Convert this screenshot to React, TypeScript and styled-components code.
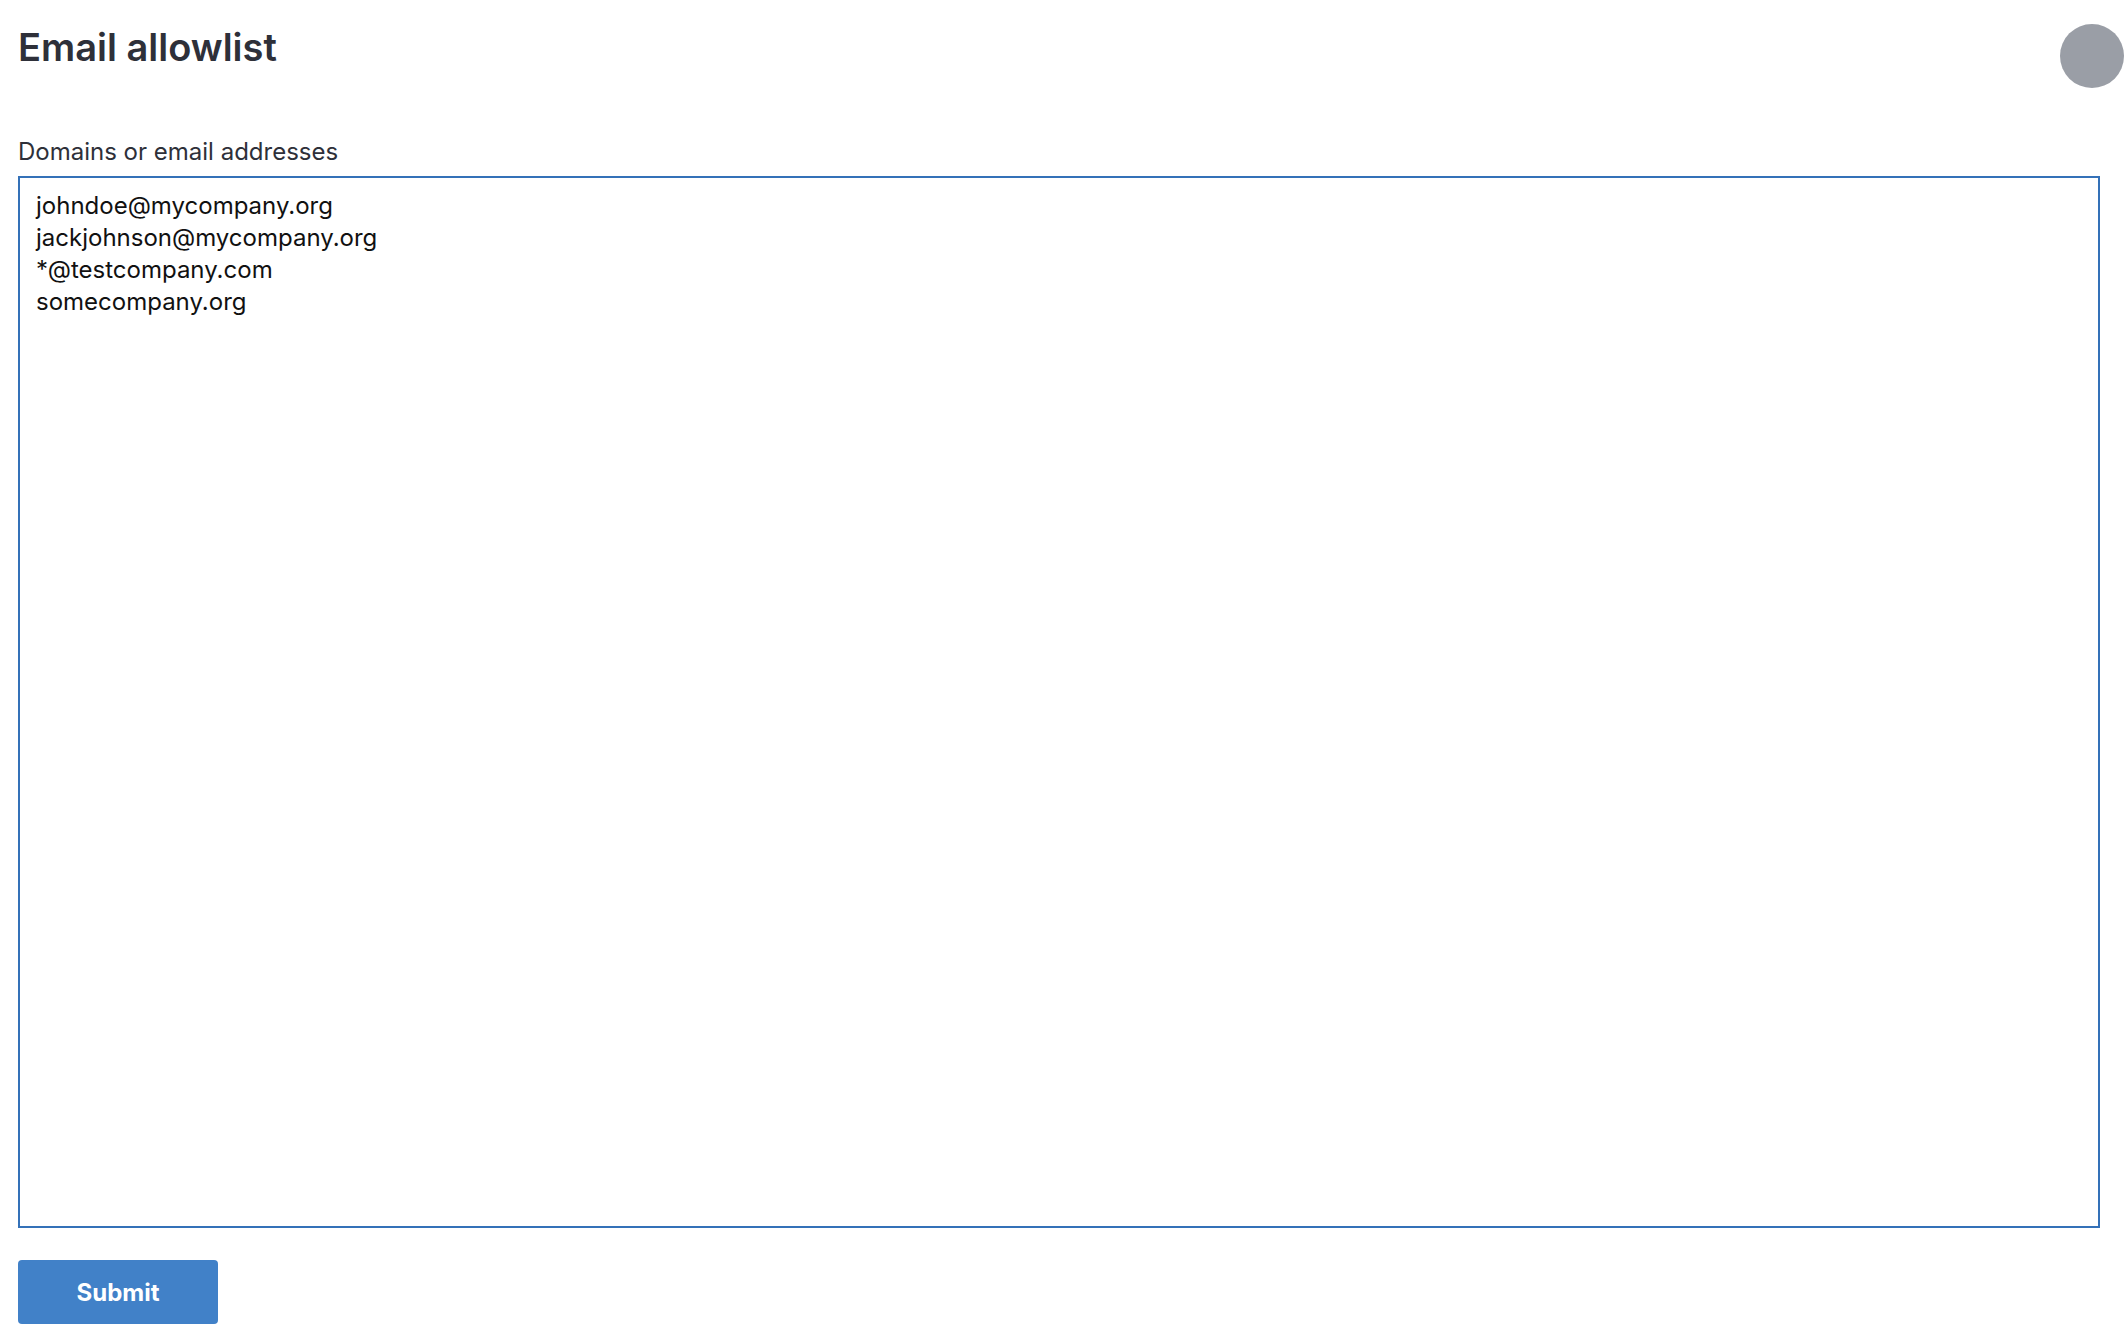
import React from 'react';
import styled, { createGlobalStyle } from 'styled-components';

const GlobalStyle = createGlobalStyle`
  html, body {
    margin: 0;
    padding: 0;
    background: #ffffff;
  }
  body {
    font-family: Inter, "Noto Sans", "Liberation Sans", sans-serif;
  }
`;

const Page = styled.main`
  display: flex;
  flex-direction: column;
  padding: 22px 26px 0 18px;
`;

const Header = styled.header`
  display: flex;
  justify-content: space-between;
  align-items: flex-start;
  height: 66px;
`;

const Title = styled.h1`
  margin: 1px 0 0;
  font-size: 38px;
  line-height: 48px;
  font-weight: 600;
  color: #2e3039;
`;

const Avatar = styled.div`
  width: 64px;
  height: 64px;
  margin-top: 2px;
  margin-right: -24px;
  border-radius: 50%;
  background: #9a9ea6;
`;

const Form = styled.form`
  display: flex;
  flex-direction: column;
  align-items: flex-start;
  margin-top: 48px;
`;

const Label = styled.label`
  font-size: 24px;
  line-height: 32px;
  color: #2e3039;
  margin-bottom: 8px;
`;

const Textarea = styled.textarea`
  box-sizing: border-box;
  width: 100%;
  height: 1052px;
  padding: 12px 16px;
  border: 2px solid #3471b8;
  border-radius: 0;
  outline: none;
  resize: none;
  font-family: Inter, "Noto Sans", "Liberation Sans", sans-serif;
  font-size: 24px;
  line-height: 32px;
  color: #111111;
  background: #ffffff;
`;

const SubmitButton = styled.button`
  margin-top: 32px;
  width: 200px;
  height: 64px;
  border: none;
  border-radius: 4px;
  background: #4181c8;
  color: #ffffff;
  font-family: Inter, "Noto Sans", "Liberation Sans", sans-serif;
  font-size: 24px;
  font-weight: 700;
  cursor: pointer;
`;

const ENTRIES = [
  'johndoe@mycompany.org',
  'jackjohnson@mycompany.org',
  '*@testcompany.com',
  'somecompany.org',
];

function App(): React.ReactElement {
  return (
    <>
      <GlobalStyle />
      <Page>
        <Header>
          <Title>Email allowlist</Title>
          <Avatar />
        </Header>
        <Form onSubmit={(e) => e.preventDefault()}>
          <Label htmlFor="allowlist">Domains or email addresses</Label>
          <Textarea id="allowlist" defaultValue={ENTRIES.join('\n')} spellCheck={false} />
          <SubmitButton type="submit">Submit</SubmitButton>
        </Form>
      </Page>
    </>
  );
}

export default App;
